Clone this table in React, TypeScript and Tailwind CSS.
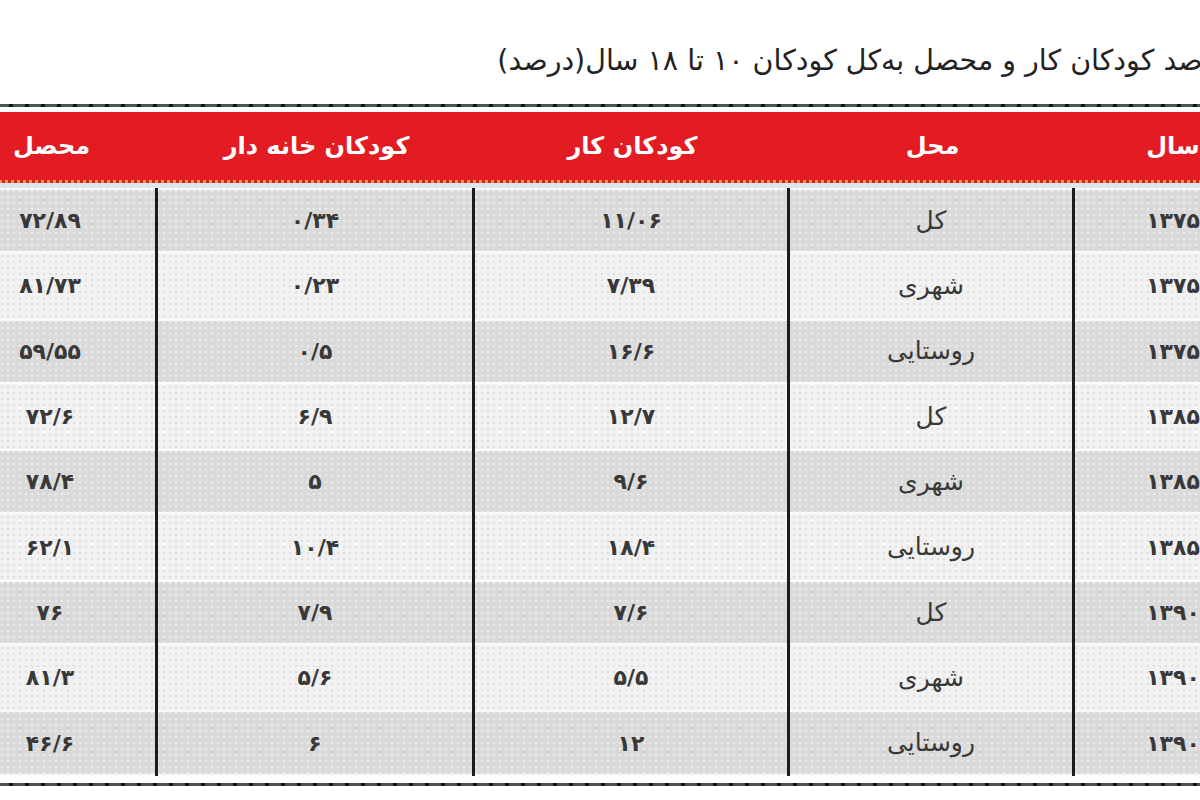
import React from 'react';

// Each row in visual right-to-left order: year, place, working, housework, student
type Row = [string, string, string, string, string];

const rows: Row[] = [
    ['۱۳۷۵', 'کل', '۱۱/۰۶', '۰/۳۴', '۷۲/۸۹'],
    ['۱۳۷۵', 'شهری', '۷/۳۹', '۰/۲۳', '۸۱/۷۳'],
    ['۱۳۷۵', 'روستایی', '۱۶/۶', '۰/۵', '۵۹/۵۵'],
    ['۱۳۸۵', 'کل', '۱۲/۷', '۶/۹', '۷۲/۶'],
    ['۱۳۸۵', 'شهری', '۹/۶', '۵', '۷۸/۴'],
    ['۱۳۸۵', 'روستایی', '۱۸/۴', '۱۰/۴', '۶۲/۱'],
    ['۱۳۹۰', 'کل', '۷/۶', '۷/۹', '۷۶'],
    ['۱۳۹۰', 'شهری', '۵/۵', '۵/۶', '۸۱/۳'],
    ['۱۳۹۰', 'روستایی', '۱۲', '۶', '۴۶/۶'],
];

const headers = ['سال', 'محل', 'کودکان کار', 'کودکان خانه دار', 'محصل'];

const font = { fontFamily: '"DejaVu Sans", sans-serif' };

function Rule() {
    return <div className="h-[3px] bg-[repeating-linear-gradient(90deg,#111_0_4px,#4b5652_4px_16px)]" />;
}

export default function App() {
    return (
        <div className="w-[1200px] h-[800px] overflow-hidden bg-white" style={font}>
            <div dir="rtl" className="w-[1326px] ml-[-55px]">
                {/* Title */}
                <div className="h-[104px] pt-[43px] pr-[42px]">
                    <p className="text-[28.5px] leading-[36px] text-[#222] whitespace-nowrap tracking-[-0.6px]">
                        درصد کودکان کار و محصل به‌کل کودکان ۱۰ تا ۱۸ سال(درصد)
                    </p>
                </div>

                <Rule />

                {/* Header */}
                <div className="mt-[5px] bg-[#e31b23]">
                    <div className="grid grid-cols-[196px_285px_315px_317px_213px] h-[68px] items-center">
                        {headers.map((h) => (
                            <div key={h} className="text-center text-white font-bold text-[24px]">
                                {h}
                            </div>
                        ))}
                    </div>
                    <div className="h-[3px] bg-[repeating-linear-gradient(90deg,#f39a4a_0_3px,#cf2418_3px_6px)]" />
                </div>
                <div className="h-[5px] bg-[#dfe5e9]" />

                {/* Body */}
                {rows.map((row, i) => (
                    <div
                        key={i}
                        className={`grid grid-cols-[196px_285px_315px_317px_213px] h-[65.3px] ${i % 2 === 0
                            ? 'bg-[#dadada] bg-[radial-gradient(circle,#ececec_1px,transparent_1.6px)] bg-[length:6px_6px] shadow-[inset_0_2px_0_#fafafa,inset_0_-2px_0_#fafafa]'
                            : 'bg-[#f2f2f2] bg-[radial-gradient(circle,#dedede_1px,transparent_1.6px)] bg-[length:6px_6px]'
                            }`}
                    >
                        {row.map((cell, j) => (
                            <div
                                key={j}
                                className={`flex items-center justify-center text-[#383838] ${j === 1
                                    ? 'text-[25px]'
                                    : j === 0
                                        ? 'text-[22px] font-bold tracking-[6px]'
                                        : 'text-[22px] font-bold tracking-[4px]'
                                    } ${j > 0 ? 'border-s-[3px] border-[#1c1c1c]' : ''}`}
                            >
                                {cell}
                            </div>
                        ))}
                    </div>
                ))}

                <div className="h-[7px]" />
                <Rule />
            </div>
        </div>
    );
}
